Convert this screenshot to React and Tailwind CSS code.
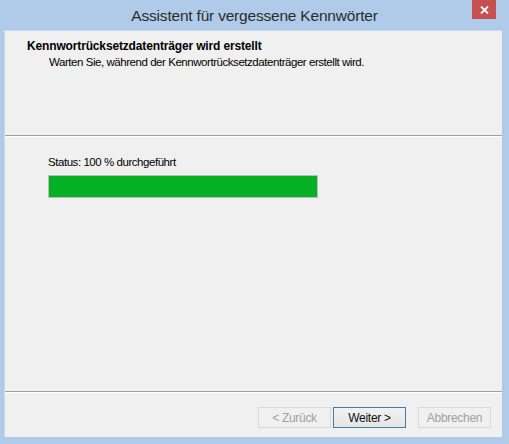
import React from "react";

const font = { fontFamily: '"Segoe UI", "Liberation Sans", Arial, sans-serif' };

function WizardButton({ label, primary, disabled, className = "" }) {
  return (
    <button
      className={
        "w-[73px] h-[21px] text-[12px] leading-none border tracking-[-0.3px] " +
        (primary
          ? "border-[#3c7fb1] bg-gradient-to-b from-[#f2f2f2] to-[#e5e5e5] text-[#111] "
          : "border-[#d9d9d9] bg-[#f0f0f0] text-[#a0a0a0] ") +
        className
      }
      disabled={disabled}
    >
      {label}
    </button>
  );
}

export default function App() {
  return (
    <div className="w-[509px] h-[444px] bg-[#afcbe9] flex flex-col" style={font}>
      {/* title bar */}
      <div className="relative h-[30px] flex items-center justify-center">
        <span className="text-[15.5px] text-[#2b2b2b] tracking-[-0.2px] pt-[1px]">
          Assistent für vergessene Kennwörter
        </span>
        <div className="absolute top-0 right-[13px] w-[24px] h-[19px] bg-[#c75050] flex items-center justify-center">
          <svg width="9" height="8" viewBox="0 0 9 8">
            <path d="M1 0.5 L8 7.5 M8 0.5 L1 7.5" stroke="#fff" strokeWidth="1.8" />
          </svg>
        </div>
      </div>

      {/* client area */}
      <div className="flex-1 ml-[4px] mr-[7px] mb-[7px] bg-[#f0f0f0] border-l border-t border-[#c9d9ea] flex flex-col">
        <div className="h-[104px] pl-[22px] pt-[8px] text-[#000]">
          <div className="text-[12px] font-bold tracking-[-0.15px] leading-[15px]">
            Kennwortrücksetzdatenträger wird erstellt
          </div>
          <div className="text-[11.5px] leading-[15px] pl-[22px] pt-[1px] tracking-[-0.45px]">
            Warten Sie, während der Kennwortrücksetzdatenträger erstellt wird.
          </div>
        </div>
        <div className="border-t border-[#a0a0a0] border-b border-b-white" />

        <div className="flex-1 pl-[43px] pt-[18px]">
          <div className="text-[11.5px] leading-[15px] text-[#000] tracking-[-0.45px]">
            Status: 100 % durchgeführt
          </div>
          <div className="mt-[5px] w-[270px] h-[23px] border border-[#bcbcbc] bg-[#e6e6e6]">
            <div className="h-full bg-[#06b025]" style={{ width: "100%" }} />
          </div>
        </div>

        <div className="border-t border-[#a0a0a0] border-b border-b-white" />
        <div className="h-[44px] flex justify-end items-start pt-[14px] pr-[11px]">
          <WizardButton label="< Zurück" disabled />
          <WizardButton label="Weiter >" primary className="ml-[2px]" />
          <WizardButton label="Abbrechen" disabled className="ml-[12px]" />
        </div>
      </div>
    </div>
  );
}
